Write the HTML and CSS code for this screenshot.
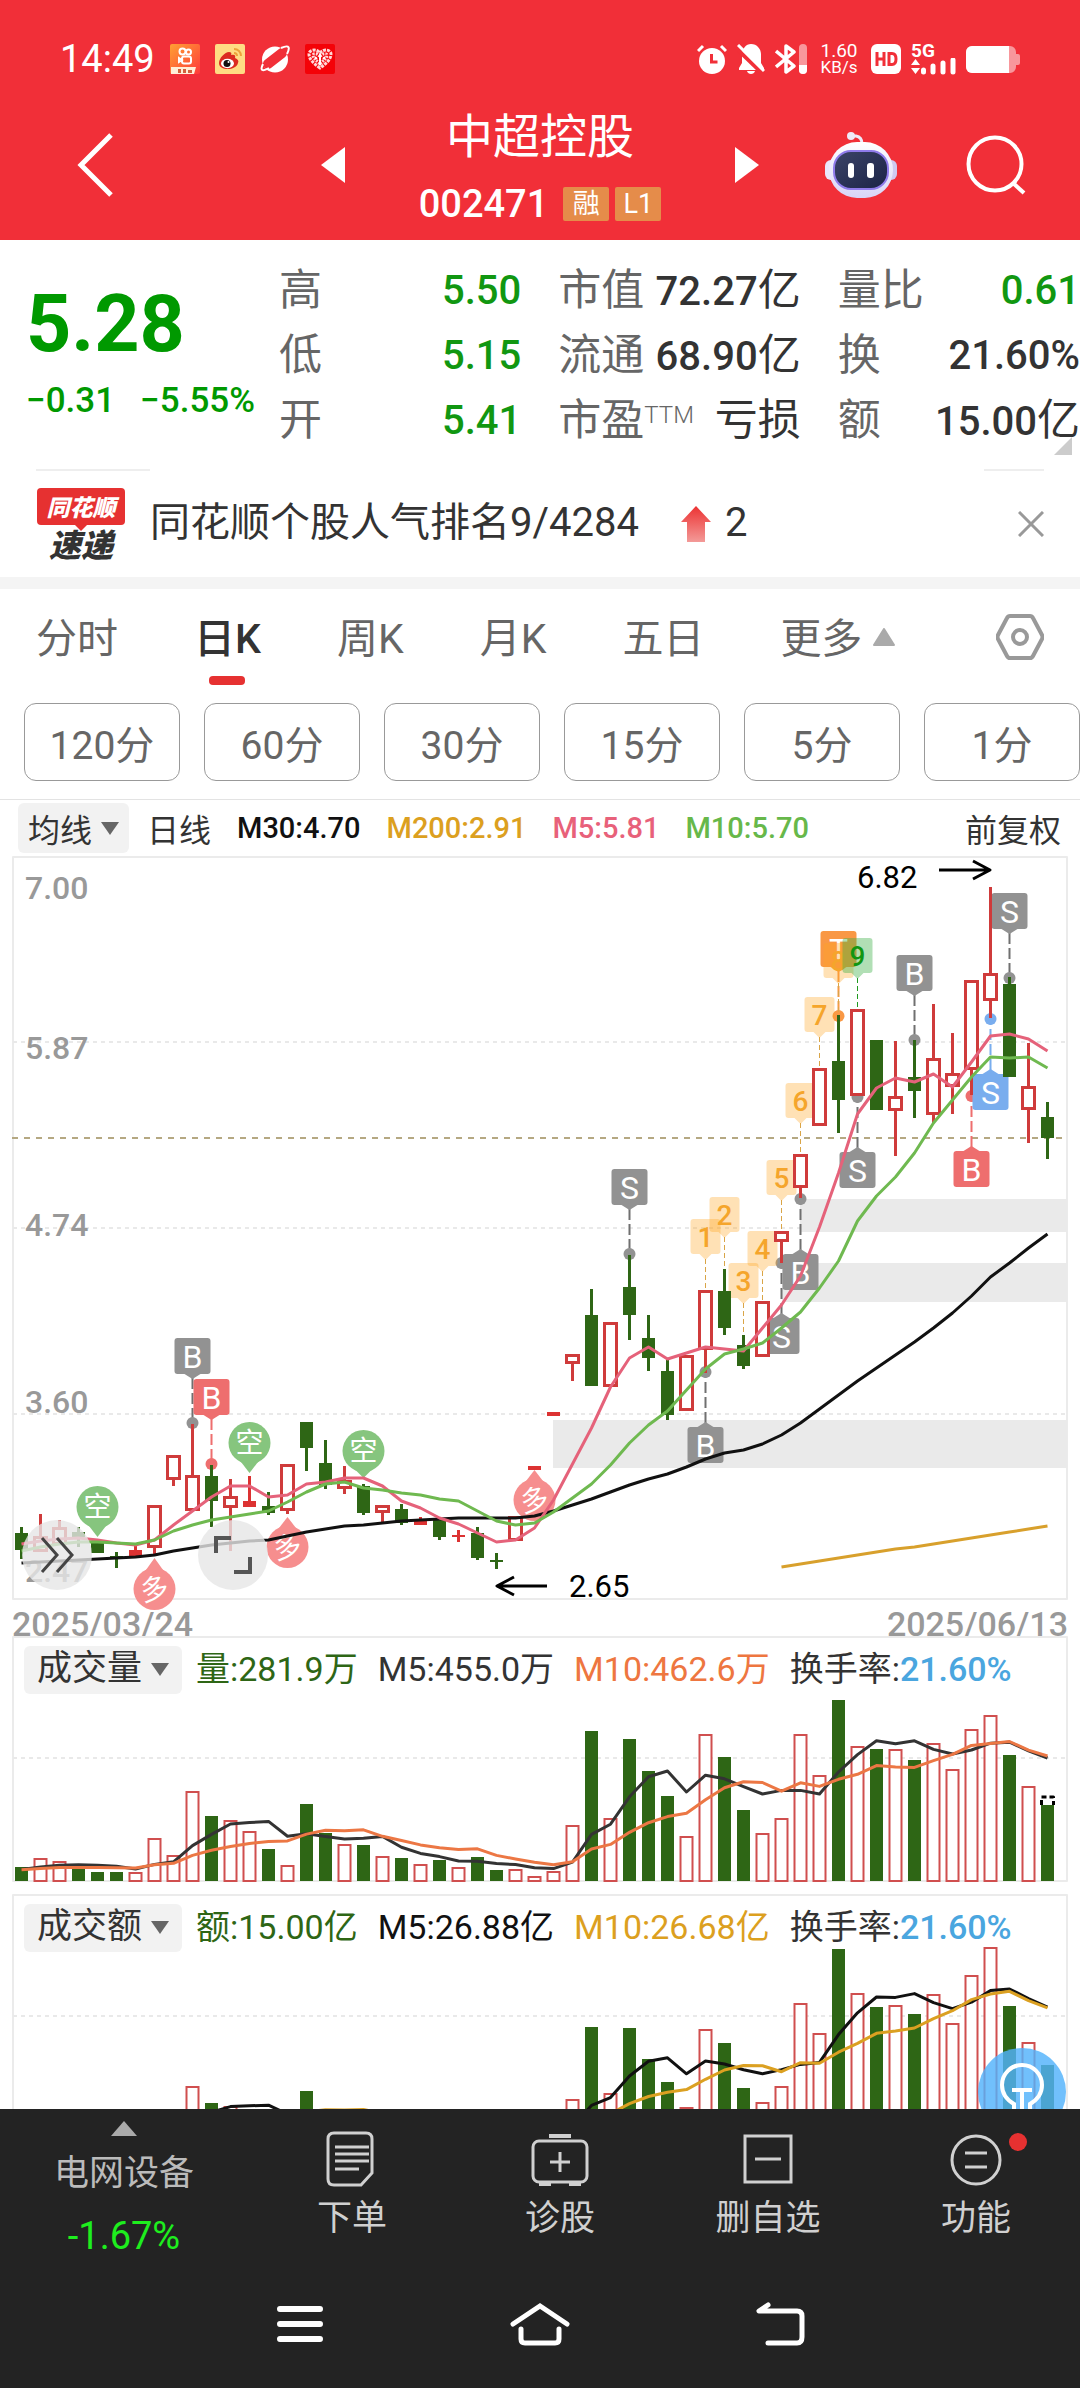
FILE: index.html
```html
<!DOCTYPE html>
<html lang="zh-CN">
<head>
<meta charset="utf-8">
<meta name="viewport" content="width=device-width">
<title>中超控股 002471</title>
<link rel="stylesheet" href="styles.css">
</head>
<body>
<div class="app">
  <header class="top">
    <div class="status">
      <span class="clock">14:49</span>
      <div class="status-apps">
        <svg width="30" height="30" viewBox="0 0 30 30"><defs><linearGradient id="ks" x1="0" y1="0" x2="1" y2="1"><stop offset="0" stop-color="#ffa033"/><stop offset="1" stop-color="#ff3a3a"/></linearGradient></defs><rect width="30" height="30" rx="2" fill="url(#ks)"/><g fill="none" stroke="#fff" stroke-width="2"><circle cx="12.500" cy="7.500" r="3"/><circle cx="18.500" cy="8" r="2.500"/><rect x="12" y="12.500" width="9" height="7" rx="2"/><path d="M12 16l-3-2v4z"/></g><path d="M1 23h25l-2 7H1z" fill="#fff0d8"/><path d="M8 25h3v4H8zM13 25h3v4h-3zM18 26h4v3h-4z" fill="#d2603c"/></svg>
        <svg width="30" height="30" viewBox="0 0 30 30"><rect width="30" height="30" rx="2" fill="#ffdc84"/><path d="M4 19c0-5 6-11 10-11 2 0 3 1 2 3 3-1 5 0 4 3 3 1 4 3 3 5-1 4-6 6-10 6-5 0-9-2-9-6z" fill="#dc2b20"/><ellipse cx="12.500" cy="19.500" rx="6.500" ry="4.700" fill="#fff"/><circle cx="12" cy="19.500" r="3.500" fill="#111"/><circle cx="13.500" cy="18" r="1" fill="#fff"/><path d="M19 5c4 0 7 3 7 7M19 9c2 0 3 1 3 3" fill="none" stroke="#eda23a" stroke-width="2"/></svg>
        <svg width="30" height="30" viewBox="0 0 30 30"><circle cx="15" cy="15.500" r="13" fill="#fff"/><rect x="1" y="9.500" width="28" height="10" rx="5" fill="#f12f38" transform="rotate(-38 15 14.500)"/><path d="M3 20c-4 8 1 7 6 4M21 4c9-4 9 0 6 6" fill="none" stroke="#fff" stroke-width="2"/></svg>
        <svg width="30" height="30" viewBox="0 0 30 30"><rect width="30" height="30" rx="2" fill="#f40208"/><path d="M15 24C8 19 4 15 4 10c0-4 7-6 11-1 4-5 11-3 11 1 0 5-4 9-11 14z" fill="none" stroke="#ffd9d9" stroke-width="3" stroke-dasharray="3 1"/><path d="M15 20c-4-4-7-6-7-9 0-2 5-2 7 2 2-4 7-4 7-2 0 3-3 5-7 9z" fill="none" stroke="#ffd9d9" stroke-width="3" stroke-dasharray="2 1"/><path d="M15 10v11M10 13l2 2M20 13l-2 2" stroke="#fff" stroke-width="2"/></svg>
      </div>
      <div class="status-right">
        <svg width="30" height="30" viewBox="0 0 30 30"><circle cx="15" cy="17" r="13" fill="#fff"/><path d="M1 7l5-5M29 7l-5-5" stroke="#fff" stroke-width="3"/><path d="M14.500 10v8h6" fill="none" stroke="#f12f38" stroke-width="3"/></svg>
        <svg width="28" height="30" viewBox="0 0 28 30"><path d="M14 0c6 0 10 5 10 10v9l3 5v2H2v-2l3-5v-9C5 5 9 0 14 0z" fill="#fff"/><path d="M10 27h8c-1 4-7 4-8 0z" fill="#fff"/><path d="M-1 4l28 27" stroke="#f12f38" stroke-width="4"/><path d="M1 1l26 26" stroke="#fff" stroke-width="3"/></svg>
        <svg width="32" height="30" viewBox="0 0 32 30"><path d="M1 7l18 15-8 6V2l8 6L1 23" fill="none" stroke="#fff" stroke-width="3.500" stroke-linejoin="round"/><rect x="24" width="8" height="30" rx="4" fill="#fff" opacity=".5"/><path d="M24 21h8v5a4 4 0 0 1-8 0z" fill="#fff"/></svg>
        <span class="speed"><span>1.60</span><span class="unit">KB/s</span></span>
        <svg width="30" height="30" viewBox="0 0 30 30"><rect width="30" height="30" rx="6" fill="#fff"/><path d="M6 8v14M13 8v14M6 15h7M18 9.500h3q4 0 4 5.500t-4 5.500h-3z" fill="none" stroke="#f12f38" stroke-width="3"/></svg>
        <span class="signal">
          <span class="net">5G</span>
          <svg width="45" height="17" viewBox="0 0 45 17"><path d="M0 7l4.500-6L9 7zM0 10l4.500 6L9 10z" fill="#fff"/><path d="M12.500 14v-2M22 14V8M32 14V5M42 14V2" stroke="#fff" stroke-width="5" stroke-linecap="round"/></svg>
        </span>
        <svg width="54" height="27" viewBox="0 0 54 27"><path d="M6 0h38a6 6 0 0 1 6 6v2h2q2 0 2 2v7q0 2-2 2h-2v2a6 6 0 0 1-6 6H6a6 6 0 0 1-6-6V6a6 6 0 0 1 6-6z" fill="#fff" opacity=".5"/><path d="M6 0h37v27H6a6 6 0 0 1-6-6V6a6 6 0 0 1 6-6z" fill="#fff"/></svg>
      </div>
    </div>
    <nav class="titlebar">
      <button class="back" aria-label="返回"><svg width="36" height="64" viewBox="0 0 36 64"><path d="M34 2L4 32l30 30" fill="none" stroke="#fff" stroke-width="5"/></svg></button>
      <div class="switcher">
        <button aria-label="上一只"><svg width="24" height="36" viewBox="0 0 24 36"><path d="M24 0v36L0 18z" fill="#fff"/></svg></button>
        <div class="name">
          <h1>中超控股</h1>
          <div class="code"><span>002471</span><span class="badge">融</span><span class="badge">L1</span></div>
        </div>
        <button aria-label="下一只"><svg width="24" height="36" viewBox="0 0 24 36"><path d="M0 0v36l24-18z" fill="#fff"/></svg></button>
      </div>
      <div class="tools">
        <button aria-label="智能助手"><svg width="72" height="66" viewBox="0 0 72 66"><defs><linearGradient id="hd" x1="0" y1="0" x2="0" y2="1"><stop offset="0" stop-color="#fff"/><stop offset="1" stop-color="#d8d4f6"/></linearGradient><linearGradient id="vs" x1="0" y1="0" x2="1" y2="1"><stop offset="0" stop-color="#3c4468"/><stop offset="1" stop-color="#1b2346"/></linearGradient></defs><path d="M26 4h5q6 1 6 8" fill="none" stroke="#efeaf8" stroke-width="3"/><circle cx="26" cy="4" r="4" fill="#efeaf8"/><rect x="0" y="28" width="12" height="20" rx="6" fill="#eae6fb"/><rect x="60" y="28" width="12" height="20" rx="6" fill="#cfc9f0"/><rect x="4" y="10" width="64" height="56" rx="28" fill="url(#hd)"/><rect x="9" y="19" width="54" height="38" rx="17" fill="url(#vs)" stroke="#8f7bea" stroke-width="2"/><rect x="23" y="31" width="6" height="15" rx="3" fill="#fff"/><rect x="42" y="31" width="7" height="15" rx="3" fill="#fff"/></svg></button>
        <button aria-label="搜索"><svg width="60" height="60" viewBox="0 0 60 60"><circle cx="29" cy="29" r="26.500" fill="none" stroke="#fff" stroke-width="4"/><path d="M47 48l11 10" stroke="#fff" stroke-width="4"/></svg></button>
      </div>
    </nav>
  </header>

  <section class="quote">
    <div class="last">
      <div class="price">5.28</div>
      <div class="change"><span>−0.31</span><span>−5.55%</span></div>
    </div>
    <dl class="stats">
      <div><dt>高</dt><dd class="down">5.50</dd></div>
      <div><dt>低</dt><dd class="down">5.15</dd></div>
      <div><dt>开</dt><dd class="down">5.41</dd></div>
    </dl>
    <dl class="stats">
      <div><dt>市值</dt><dd>72.27<span class="cn">亿</span></dd></div>
      <div><dt>流通</dt><dd>68.90<span class="cn">亿</span></dd></div>
      <div><dt>市盈<sup>TTM</sup></dt><dd class="cn">亏损</dd></div>
    </dl>
    <dl class="stats">
      <div><dt>量比</dt><dd class="down">0.61</dd></div>
      <div><dt>换</dt><dd>21.60%</dd></div>
      <div><dt>额</dt><dd>15.00<span class="cn">亿</span></dd></div>
    </dl>
    <svg class="corner" width="18" height="18" viewBox="0 0 18 18"><path d="M18 0v18H0z" fill="#ccc"/></svg>
  </section>

  <div class="news-rule"><i class="rule-long"></i><i class="rule-short"></i></div>
  <section class="news">
    <div class="news-logo">
      <span class="logo-top">同花顺</span>
      <span class="logo-bottom">速递</span>
    </div>
    <p>同花顺个股人气排名9/4284</p>
    <svg class="up" width="30" height="36" viewBox="0 0 30 36"><defs><linearGradient id="ar" x1="0" y1="0" x2="0" y2="1"><stop offset="0" stop-color="#ec3232"/><stop offset="1" stop-color="#f39a98"/></linearGradient></defs><path d="M15 0l15 16h-6v20H6V16H0z" fill="url(#ar)"/></svg>
    <span class="rise">2</span>
    <button class="close" aria-label="关闭"><svg width="26" height="26" viewBox="0 0 26 26"><path d="M1 1l24 24M25 1L1 25" stroke="#999" stroke-width="3"/></svg></button>
  </section>

  <section class="tabs">
    <button class="tab">分时</button>
    <button class="tab active">日K</button>
    <button class="tab">周K</button>
    <button class="tab">月K</button>
    <button class="tab">五日</button>
    <button class="tab more">更多<svg width="22" height="18" viewBox="0 0 22 18"><path d="M11 1l10 16H1z" fill="#aaa" stroke="#aaa" stroke-width="2" stroke-linejoin="round"/></svg></button>
    <button class="gear" aria-label="设置"><svg width="48" height="46" viewBox="0 0 48 46"><path d="M14 2h20q2 0 3 2l9 17q1 2 0 4l-9 17q-1 2-3 2H14q-2 0-3-2L2 25q-1-2 0-4l9-17q1-2 3-2z" fill="none" stroke="#999" stroke-width="4"/><circle cx="24" cy="23" r="7" fill="none" stroke="#999" stroke-width="4"/></svg></button>
  </section>
  <section class="periods">
    <button>120分</button><button>60分</button><button>30分</button><button>15分</button><button>5分</button><button>1分</button>
  </section>

  <main class="charts">
    <div class="legend">
      <button class="pill">均线<i class="caret"></i></button>
      <span class="day">日线</span>
      <span class="m30">M30:4.70</span><span class="m200">M200:2.91</span><span class="m5">M5:5.81</span><span class="m10">M10:5.70</span>
      <span class="adj">前复权</span>
    </div>
    <div class="kline">
      <svg id="kline" class="plot" viewBox="0 0 1080 744"></svg>
      <button class="round forward" aria-label="更多行情"><svg width="36" height="36" viewBox="0 0 36 36"><path d="M3 1l15 17L3 35M18 1l15 17-15 17" fill="none" stroke="#444" stroke-width="3"/></svg></button>
      <button class="round expand" aria-label="全屏"><svg width="38" height="38" viewBox="0 0 38 38"><path d="M2 17V2h15M36 21v15H20" fill="none" stroke="#555" stroke-width="4"/></svg></button>
    </div>
    <div class="dates"><span>2025/03/24</span><span>2025/06/13</span></div>
    <div class="panel">
      <svg id="volume" class="plot" viewBox="0 0 1080 258"></svg>
      <div class="panel-head">
        <button class="pill">成交量<i class="caret"></i></button>
        <span class="vol">量:281.9万</span><span>M5:455.0万</span><span class="orange">M10:462.6万</span><span>换手率:<b>21.60%</b></span>
      </div>
    </div>
    <div class="panel">
      <svg id="amount" class="plot" viewBox="0 0 1080 258"></svg>
      <div class="panel-head">
        <button class="pill">成交额<i class="caret"></i></button>
        <span class="vol">额:15.00亿</span><span class="m30">M5:26.88亿</span><span class="m200">M10:26.68亿</span><span>换手率:<b>21.60%</b></span>
      </div>
    </div>
    <button class="tip" aria-label="提示"><svg width="88" height="88" viewBox="0 0 88 88"><circle cx="44" cy="44" r="44" fill="#52b2fb" opacity=".82"/><path d="M36 70V56q-12-7-12-19a20 20 0 0 1 40 0q0 12-12 19v14M34 42h20M44 42v28" fill="none" stroke="#fff" stroke-width="4"/></svg></button>
  </main>

  <footer class="bottom">
    <div class="actions">
      <button class="sector">
        <svg width="26" height="15" viewBox="0 0 26 15"><path d="M13 0l13 15H0z" fill="#aaa"/></svg>
        <span>电网设备</span>
        <span class="pct">-1.67%</span>
      </button>
      <button class="action"><svg width="58" height="56" viewBox="0 0 58 56"><path d="M11 2h32q6 0 6 6v34L38 54H11q-6 0-6-6V8q0-6 6-6zM12 16h34M12 23h34M12 30h34M12 38h24" fill="none" stroke="#d0d0d0" stroke-width="3"/></svg><span>下单</span></button>
      <button class="action"><svg width="58" height="56" viewBox="0 0 58 56"><rect x="2" y="10" width="54" height="41" rx="6" fill="none" stroke="#d0d0d0" stroke-width="3"/><path d="M18 5h22M8 53h12M38 53h12" stroke="#d0d0d0" stroke-width="4"/><path d="M29 21v20M19 31h20" stroke="#d0d0d0" stroke-width="3"/></svg><span>诊股</span></button>
      <button class="action"><svg width="58" height="56" viewBox="0 0 58 56"><path d="M6 5h46v46H6zM16 28h26" fill="none" stroke="#d0d0d0" stroke-width="3"/></svg><span>删自选</span></button>
      <button class="action"><svg width="58" height="56" viewBox="0 0 58 56"><circle cx="29" cy="29" r="24" fill="none" stroke="#d0d0d0" stroke-width="3"/><path d="M18 22h22M18 36h22" stroke="#d0d0d0" stroke-width="3"/></svg><span>功能</span><i class="dot"></i></button>
    </div>
    <div class="system">
      <button aria-label="最近任务"><svg width="60" height="44" viewBox="0 0 60 44"><path d="M10 7h40M10 22h40M10 37h40" stroke="#fff" stroke-width="6" stroke-linecap="round"/></svg></button>
      <button aria-label="主页"><svg width="60" height="44" viewBox="0 0 60 44"><path d="M3 22L30 4l27 18M11 27v10q0 4 4 4h30q4 0 4-4V27" fill="none" stroke="#fff" stroke-width="5" stroke-linecap="round"/></svg></button>
      <button aria-label="后退"><svg width="60" height="44" viewBox="0 0 60 44"><path d="M18 3L9 9h38q5 0 5 5v21q0 6-5 6H18" fill="none" stroke="#fff" stroke-width="5" stroke-linecap="round" stroke-linejoin="round"/></svg></button>
    </div>
  </footer>
</div>
<script src="chart.js"></script>
</body>
</html>
```
FILE: styles.css
```css
* { box-sizing: border-box; }
body {
  margin: 0;
  background: #fff;
  color: #333;
  font-family: Roboto, "Noto Sans CJK SC", sans-serif;
}
button {
  margin: 0;
  padding: 0;
  border: 0;
  background: none;
  color: inherit;
  font: inherit;
}
button svg, .plot { display: block; }
h1, p, dl, dd { margin: 0; }
i { font-style: normal; }

.app {
  display: flex;
  flex-direction: column;
  height: 100vh;
  overflow: hidden;
}

/* header */
.top { background: #f12f38; color: #fff; flex: none; }
.status {
  display: flex;
  align-items: center;
  height: 106px;
  padding: 12px 60px 0;
}
.clock { font-size: 38px; width: 110px; }
.status-apps { display: flex; gap: 15px; }
.status-right { display: flex; align-items: center; gap: 10px; margin-left: auto; }
.speed {
  display: flex;
  flex-direction: column;
  align-items: center;
  width: 44px;
  font-size: 19px;
  line-height: 16px;
}
.unit { font-size: 17px; }
.signal { display: flex; flex-direction: column; line-height: 15px; }
.net { font-size: 19px; font-weight: 700; }
.titlebar {
  display: grid;
  grid-template-columns: 1fr 438px 1fr;
  align-items: center;
  height: 134px;
  padding-bottom: 16px;
}
.back { justify-self: start; margin-left: 77px; }
.switcher { display: flex; align-items: center; justify-content: space-between; }
.name { display: flex; flex-direction: column; align-items: center; gap: 22px; }
h1 { font-size: 47px; font-weight: 400; line-height: 56px; }
.code {
  display: flex;
  align-items: center;
  gap: 6px;
  font-size: 38px;
  font-weight: 500;
  line-height: 34px;
}
.badge {
  min-width: 46px;
  height: 34px;
  border-radius: 2px;
  background: #e58c4a;
  font-size: 27px;
  font-weight: 400;
  text-align: center;
}
.code span:first-child { margin-right: 9px; }
.tools { display: flex; align-items: center; gap: 69px; padding-left: 66px; }

/* quote */
.quote {
  position: relative;
  display: flex;
  gap: 37px;
  flex: none;
  height: 229px;
  padding-top: 18px;
}
.last { width: 242px; padding: 26px 0 0 26px; color: #090; white-space: nowrap; }
.price { font-size: 79px; font-weight: 700; line-height: 80px; }
.change {
  display: flex;
  gap: 25px;
  margin-top: 17px;
  font-size: 35px;
  font-weight: 500;
  line-height: 40px;
}
.stats { flex: 1; white-space: nowrap; }
.stats div {
  display: flex;
  justify-content: space-between;
  height: 65px;
  line-height: 65px;
}
dt { color: #666; font-size: 43px; }
dd { font-size: 40px; font-weight: 500; }
dd .cn, dd.cn { font-size: 43px; font-weight: 400; }
sup { font-size: 24px; line-height: 1px; vertical-align: 12px; font-weight: 300; }
.down { color: #119711; }
.corner { position: absolute; right: 8px; bottom: 14px; }

/* news */
.news-rule { display: flex; justify-content: space-between; flex: none; height: 2px; padding: 0 36px; }
.rule-long { width: 114px; background: #eee; }
.rule-short { width: 60px; background: #eee; }
.news {
  display: flex;
  align-items: center;
  flex: none;
  height: 118px;
  padding: 0 36px;
  border-bottom: 12px solid #f4f4f4;
}
.news-logo {
  display: flex;
  flex-direction: column;
  align-items: center;
  width: 90px;
  margin-right: 24px;
  font-family: "Noto Sans CJK SC", sans-serif;
  font-style: italic;
  font-weight: 900;
}
.logo-top {
  position: relative;
  width: 88px;
  border-radius: 4px;
  background: #e63131;
  color: #fff;
  font-size: 23px;
  line-height: 37px;
  text-align: center;
}
.logo-top::after {
  content: "";
  position: absolute;
  left: 38px;
  top: 37px;
  border: 6px solid transparent;
  border-top-color: #e63131;
}
.logo-bottom { font-size: 32px; line-height: 36px; }
.news p, .rise { font-size: 40px; line-height: 50px; padding-bottom: 2px; }
.up { margin: 0 14px 0 42px; }
.close { margin-left: auto; }

/* tabs */
.tabs {
  display: flex;
  gap: 76px;
  flex: none;
  height: 114px;
  padding: 24px 36px 0;
  color: #666;
}
.tab {
  display: flex;
  flex-direction: column;
  align-items: center;
  gap: 11px;
  font-size: 41px;
  line-height: 52px;
}
.active { color: #333; font-weight: 500; }
.active::after { content: ""; width: 36px; height: 9px; border-radius: 4px; background: #e63131; }
.more { flex-direction: row; align-items: flex-start; }
.more svg { margin-top: 15px; }
.gear { height: 48px; margin-left: auto; }
.periods {
  display: flex;
  gap: 24px;
  flex: none;
  padding: 0 0 18px 24px;
  border-bottom: 1px solid #e3e3e3;
}
.periods button {
  flex: 1;
  height: 78px;
  border: 1px solid #999;
  border-radius: 12px;
  color: #666;
  font-size: 39px;
}

/* charts */
.charts { position: relative; flex: 1; min-height: 0; overflow: hidden; }
.legend {
  display: flex;
  align-items: center;
  gap: 26px;
  height: 56px;
  padding: 0 19px 0 18px;
  font-size: 29px;
  font-weight: 500;
}
.pill {
  display: flex;
  align-items: center;
  gap: 9px;
  height: 50px;
  padding: 0 10px;
  border-radius: 6px;
  background: #f2f2f2;
  font-size: 32px;
  font-weight: 400;
}
.caret { border: 9px solid transparent; border-top: 13px solid #666; border-bottom: 0; }
.legend .pill { margin-right: -8px; }
.day, .adj { font-size: 32px; font-weight: 400; }
.adj { margin-left: auto; }
.m30 { color: #111; }
.m200 { color: #dca01f; }
.m5 { color: #e8617a; }
.m10 { color: #67b84a; }
.plot { width: 100%; overflow: visible; }
.kline { position: relative; }
.round {
  position: absolute;
  bottom: 10px;
  display: grid;
  place-items: center;
  width: 70px;
  height: 70px;
  border-radius: 50%;
  background: rgba(230, 230, 230, .8);
}
.forward { left: 22px; }
.expand { left: 198px; }
.dates {
  display: flex;
  justify-content: space-between;
  height: 36px;
  padding: 0 12px;
  color: #999;
  font-size: 34px;
  font-weight: 500;
  line-height: 49px;
}
.panel { display: grid; }
.panel > * { grid-area: 1 / 1; }
.panel-head {
  display: flex;
  align-items: center;
  align-self: start;
  gap: 20px;
  padding: 10px 24px;
  font-size: 34px;
  line-height: 44px;
  white-space: nowrap;
}
.panel-head span { padding-bottom: 2px; }
.panel-head .pill { height: 48px; padding: 0 13px 2px; margin-right: -6px; font-size: 35px; }
.vol { color: #2e6615; }
.orange { color: #ee7640; }
.panel-head b { color: #4aa6df; font-weight: 500; }
.tip { position: absolute; right: 14px; bottom: -27px; }

/* bottom bars */
.bottom { flex: none; height: 279px; background: #232323; color: #d0d0d0; }
.actions { display: grid; grid-template-columns: 248fr 208fr 208fr 208fr 208fr; height: 149px; }
.actions button {
  position: relative;
  display: flex;
  flex-direction: column;
  align-items: center;
  font-size: 35px;
  line-height: 50px;
}
.sector { padding-top: 12px; color: #bbb; gap: 13px; }
.action { padding-top: 22px; gap: 7px; }
.sector .pct { color: #1eee1e; font-size: 38px; font-weight: 400; line-height: 48px; }
.dot { position: absolute; left: 137px; top: 24px; width: 18px; height: 18px; border-radius: 50%; background: #e63131; }
.system { display: grid; grid-template-columns: repeat(3, 1fr); padding: 44px 180px 0; justify-items: center; }
```
FILE: chart.js
```js
const NS = 'http://www.w3.org/2000/svg';
const RED = '#cf3b3b', GREEN = '#2e6615', BASE = 245;
const x = i => 21.5 + 19 * i;

// [kind, high, body top, body bottom, low]; g falling, r rising, s flat
const candles = [
  ['g',671,677,694,703],['r',658,680,696,696],['r',664,671,689,689],['g',671,676,681,691],['g',684,687,697,697],
  ['g',696,700,702,712],['s',690,694,700,700],['r',649,649,692,699],['r',599,599,624,630],['r',568,619,655,655],
  ['g',609,620,645,671],['r',623,640,652,695],['s',620,645,651,651],['g',636,650,657,659],['r',608,608,655,658],
  ['g',566,566,592,615],['g',584,607,629,633],['r',610,624,633,638],['g',628,630,657,659],['r',649,649,657,667],
  ['g',648,653,667,669],['s',661,665,669,669],['g',664,664,681,684],['s',674,679,681,686],['g',671,677,702,704],
  ['g',697,704,706,713],['r',660,660,685,685],['s',610,610,614,614],['s',556,556,560,560],['r',498,498,508,525],
  ['g',433,459,530,530],['r',466,466,531,531],['g',399,431,459,484],['g',459,482,502,515],['g',503,515,559,564],
  ['r',499,499,555,555],['r',434,434,494,517],['g',413,435,472,479],['g',479,489,510,513],['r',445,445,501,501],
  ['r',375,375,386,407],['r',298,298,332,342],['r',212,212,270,270],['g',159,205,244,277],['r',153,153,240,240],
  ['g',184,184,254,254],['r',185,240,255,300],['g',184,221,235,262],['r',148,202,259,267],['r',177,217,231,258],
  ['r',124,124,214,239],['r',31,117,145,162],['g',121,128,221,221],['r',187,230,254,287],['g',246,261,282,303]
];
const ma5 = [688,685,683,682,684,687,689,684,669,655,641,630,630,641,639,628,626,622,622,630,645,652,662,668,677,686,684,672,644,608,572,531,502,491,503,497,491,493,495,472,449,420,371,317,258,232,222,226,218,231,206,180,178,183,195];
const ma10 = [695,691,688,686,686,687,688,684,675,669,664,661,658,655,646,636,628,626,632,634,637,639,643,645,655,665,669,667,656,642,628,609,587,569,555,534,513,498,493,487,472,456,432,405,365,340,321,297,267,244,221,201,202,201,212];
const ma30 = [707,706,705,704,703,702,701,699,695,692,689,687,685,684,680,676,673,670,669,667,665,664,663,662,662,662,662,660,655,649,643,636,629,623,618,611,603,597,594,588,579,567,553,539,525,512,499,486,472,457,440,421,407,392,378];
const ma200 = [711,708,705,702,699,696,693,691,688,685,682,679,676,673,670];
const volume = [231,222,225,232,236,236,236,202,219,155,180,184,195,213,229,168,197,208,209,220,222,228,224,231,221,234,233,240,235,189,95,182,103,135,160,200,98,121,174,197,182,98,139,64,110,113,113,124,107,133,93,79,119,150,169];
const amount = [237,232,234,238,240,240,240,220,230,192,209,212,216,227,236,197,218,224,224,231,232,235,233,237,231,239,238,242,239,205,133,199,134,165,188,213,135,149,194,208,192,109,139,55,99,113,111,120,100,129,81,53,112,148,171];

// [letter, index, box centre, dot, colour]
const signals = [
  ['B',9,500,567,'#929292'],['B',10,541,608,'#ee6e6e'],['S',32,331,398,'#929292'],['B',36,589,516,'#929292'],
  ['S',40,480,407,'#929292'],['B',41,416,343,'#929292'],['T',43,93,160,'#f99845'],['S',44,314,241,'#929292'],
  ['B',47,117,184,'#929292'],['B',50,313,240,'#ee6e6e'],['S',51,236,163,'#79adee'],['S',52,55,122,'#929292']
];
// [number, index, box centre, line end]
const counts = [[1,36,381,434],[2,37,359,413],[3,38,425,479],[4,39,393,446],[5,40,322,376],[6,41,245,298],[7,42,159,213],[8,43,105,159],[9,44,100,154]];
// [character, index, centre, tip]
const pins = [['空',4,651,681],['空',12,587,617],['空',18,595,622],['多',7,733,702],['多',14,691,661],['多',27,644,614]];

function add(svg, tag, attrs, text) {
  const el = document.createElementNS(NS, tag);
  for (const k in attrs) el.setAttribute(k, attrs[k]);
  if (text !== undefined) el.textContent = text;
  svg.append(el);
}
function path(svg, d, stroke, width, dash) {
  add(svg, 'path', { d, fill: 'none', stroke, 'stroke-width': width, 'stroke-dasharray': dash || 'none', 'stroke-linejoin': 'round' });
}
function curve(svg, ys, color, start = 0, width = 3) {
  path(svg, 'M' + ys.map((y, k) => x(k + start) + ' ' + y).join('L'), color, width);
}
function label(svg, s, px, py, size, fill, weight = 400, anchor = 'start') {
  add(svg, 'text', { x: px, y: py, 'font-size': size, fill, 'font-weight': weight, 'text-anchor': anchor }, s);
}

const k = document.getElementById('kline');
path(k, 'M13 1H1067V743H13z', '#ebebeb', 2);
[186, 372, 558].forEach(y => path(k, `M13 ${y}H1067`, '#e9e9e9', 2, '4 4'));
[[800,343,33],[782,407,39],[553,564,48]].forEach(b => add(k, 'rect', { x: b[0], y: b[1], width: 1067 - b[0], height: b[2], fill: '#eaeaea' }));
path(k, 'M12 282H1067', '#b5a882', 2, '6 6');
[['7.00',43],['5.87',203],['4.74',380],['3.60',557],['2.47',726]].forEach(t => label(k, t[0], 25, t[1], 32, '#999', 500));

signals.forEach(([s, i, c, dot, color]) => {
  const cx = x(i), dir = dot > c ? 1 : -1;
  path(k, `M${cx} ${c + 22 * dir}V${dot}`, color === '#929292' ? '#707070' : color, 2, '11 4');
  add(k, 'circle', { cx, cy: dot, r: 6, fill: color });
  add(k, 'rect', { x: cx - 18, y: c - 18, width: 36, height: 36, rx: 3, fill: color });
  add(k, 'path', { d: `M${cx - 8} ${c + 18 * dir}h16l-8 ${5 * dir}z`, fill: color });
  label(k, s, cx, c + 12, 32, '#fff', 400, 'middle');
});
counts.forEach(([n, i, c, end]) => {
  const green = n === 9, cx = x(i);
  path(k, `M${cx} ${c + 22}V${end}`, green ? '#1f9a1f' : '#d9a548', 1, '5 3');
  add(k, 'path', { d: `M${cx - 12} ${c - 18}h24q3 0 3 3v29q0 3-3 3h-6l-6 6l-6-6h-6q-3 0-3-3v-29q0-3 3-3z`, fill: green ? '#3cae46' : '#ffa51f', opacity: green ? .4 : .33 });
  label(k, n, cx, c + 10, 28, green ? '#129612' : '#f5a52b', 500, 'middle');
});
pins.forEach(([s, i, c, tip]) => {
  const cx = x(i), bull = s === '多', fill = bull ? '#f68e8e' : '#86c57e', d = tip > c ? 1 : -1;
  add(k, 'circle', { cx, cy: c, r: 21, fill });
  add(k, 'path', { d: `M${cx - 10} ${c + 17 * d}L${cx} ${tip}L${cx + 10} ${c + 17 * d}z`, fill });
  add(k, 'text', { x: cx, y: c + 10, 'font-size': 28, fill: '#fff', 'text-anchor': 'middle', transform: bull ? `rotate(-12 ${cx} ${c})` : '' }, s);
});

candles.forEach(([kind, hi, top, bot, lo], i) => {
  const cx = x(i), color = kind === 'g' ? GREEN : kind === 's' ? '#dc3232' : RED;
  if (kind === 'r') {
    path(k, `M${cx} ${hi}V${top}M${cx} ${bot}V${lo}`, color, 3);
    add(k, 'rect', { x: cx - 6, y: top + 1.5, width: 12, height: bot - top - 3, fill: '#fff', stroke: color, 'stroke-width': 3 });
  } else {
    path(k, `M${cx} ${hi}V${lo}`, color, 3);
    add(k, 'rect', { x: cx - 6.5, y: top, width: 13, height: bot - top, fill: color });
  }
});
curve(k, ma200, '#d8a02c', 40);
curve(k, ma30, '#111');
curve(k, ma5, '#e5627a');
curve(k, ma10, '#6fb950');
label(k, '6.82', 857, 32, 31, '#000');
label(k, '2.65', 569, 741, 31, '#000');
path(k, 'M939 14H990M973 5L990 14L973 23', '#000', 3);
path(k, 'M547 730H497M514 721L497 730L514 739', '#000', 3);

// bars with their 5 and 10 day averages
function bars(id, tops, c5, c10) {
  const svg = document.getElementById(id);
  path(svg, `M13 ${BASE}V1H1067V${BASE}z`, '#ebebeb', 2);
  path(svg, 'M13 122H1067', '#e9e9e9', 2, '4 4');
  tops.forEach((top, i) => {
    const cx = x(i);
    if (candles[i][0] === 'g') add(svg, 'rect', { x: cx - 6.5, y: top, width: 13, height: BASE - top, fill: GREEN });
    else add(svg, 'rect', { x: cx - 6, y: top + 1, width: 12, height: BASE - top - 1, fill: '#fff', stroke: '#d04f4f', 'stroke-width': 2 });
  });
  const all = Array(9).fill(tops === volume ? 234 : 239).concat(tops);
  const mean = n => tops.map((_, i) => all.slice(i + 10 - n, i + 10).reduce((a, b) => a + b) / n);
  curve(svg, mean(5), c5);
  curve(svg, mean(10), c10);
  return svg;
}
const v = bars('volume', volume, '#333', '#ec7744');
path(v, `M${x(54) - 6} 169V161H${x(54) + 6}V169`, '#000', 3, '5 3');
bars('amount', amount, '#111', '#dba021');
```
